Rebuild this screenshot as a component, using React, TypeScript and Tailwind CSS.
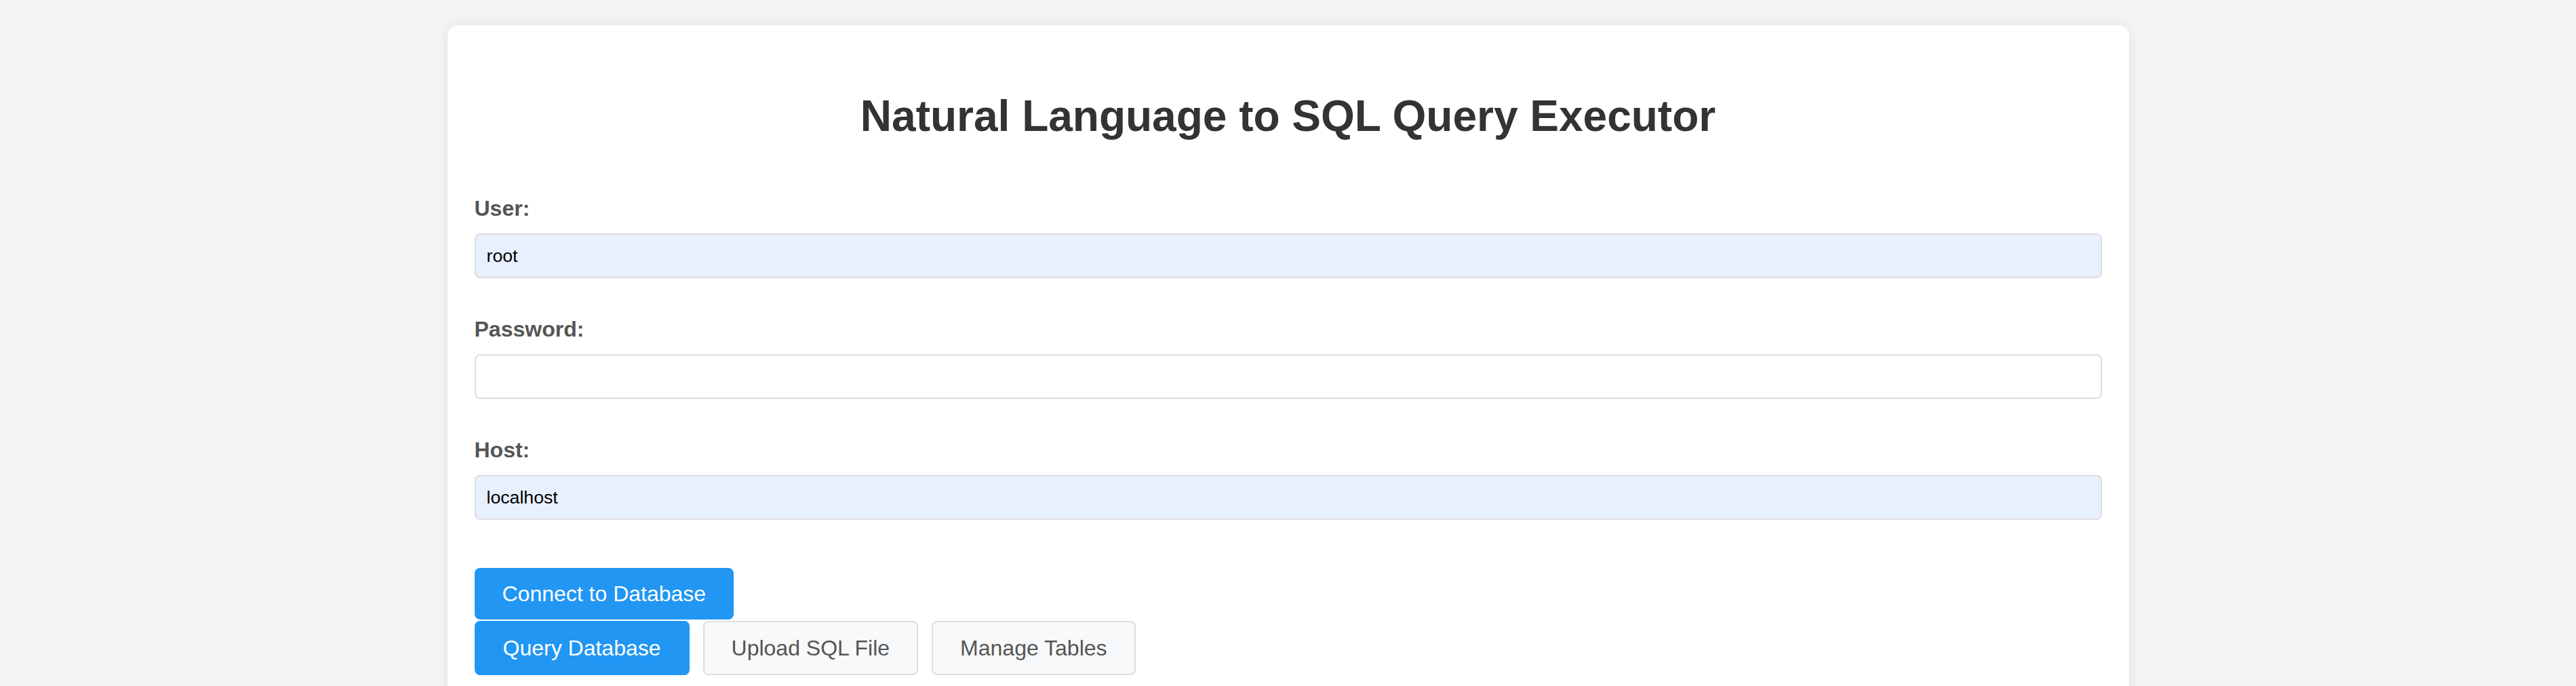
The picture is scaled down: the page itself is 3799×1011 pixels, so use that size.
const fields = [
  { label: "User:", value: "root", filled: true },
  { label: "Password:", value: "", filled: false, type: "password" },
  { label: "Host:", value: "localhost", filled: true },
];

function Field({
  label,
  value,
  filled,
  type = "text",
  last = false,
}: {
  label: string;
  value: string;
  filled: boolean;
  type?: string;
  last?: boolean;
}) {
  return (
    <div className={last ? "mb-[71px]" : "mb-[57px]"}>
      <label className="mb-[19px] block text-[32px] leading-[36px] font-bold text-[#555]">
        {label}
      </label>
      <input
        type={type}
        defaultValue={value}
        className={
          "block h-[66px] w-full rounded-[8px] border-2 border-[#dddddd] px-[16px] text-[26.67px] leading-[30px] text-black outline-none " +
          (filled ? "bg-[#e8f0fe]" : "bg-white")
        }
      />
    </div>
  );
}

export default function App() {
  return (
    <div className="min-h-screen bg-[#f4f4f4] pt-[37px] pb-[40px] font-['Liberation_Sans',Arial,sans-serif]">
      <div className="mx-auto w-[2480px] rounded-[16px] bg-white px-[40px] pt-[97px] pb-[80px] shadow-[0_0_20px_rgba(0,0,0,0.08)]">
        <h1 className="mb-[81px] text-center text-[64px] leading-[74px] font-bold text-[#333]">
          Natural Language to SQL Query Executor
        </h1>

        {fields.map((f, i) => (
          <Field
            key={f.label}
            label={f.label}
            value={f.value}
            filled={f.filled}
            type={f.type}
            last={i === fields.length - 1}
          />
        ))}

        <div className="flex flex-col items-start gap-[2px]">
          <button className="h-[76px] rounded-[8px] bg-[#2196f3] px-[41px] text-[32px] leading-[36px] text-white">
            Connect to Database
          </button>
          <div className="flex gap-[20px]">
            <button className="h-[80px] rounded-[8px] border-2 border-[#2196f3] bg-[#2196f3] px-[40px] text-[32px] leading-[36px] text-white">
              Query Database
            </button>
            <button className="h-[80px] rounded-[8px] border-2 border-[#dddddd] bg-[#f8f9fa] px-[40px] text-[32px] leading-[36px] text-[#555]">
              Upload SQL File
            </button>
            <button className="h-[80px] rounded-[8px] border-2 border-[#dddddd] bg-[#f8f9fa] px-[40px] text-[32px] leading-[36px] text-[#555]">
              Manage Tables
            </button>
          </div>
        </div>
      </div>
    </div>
  );
}
